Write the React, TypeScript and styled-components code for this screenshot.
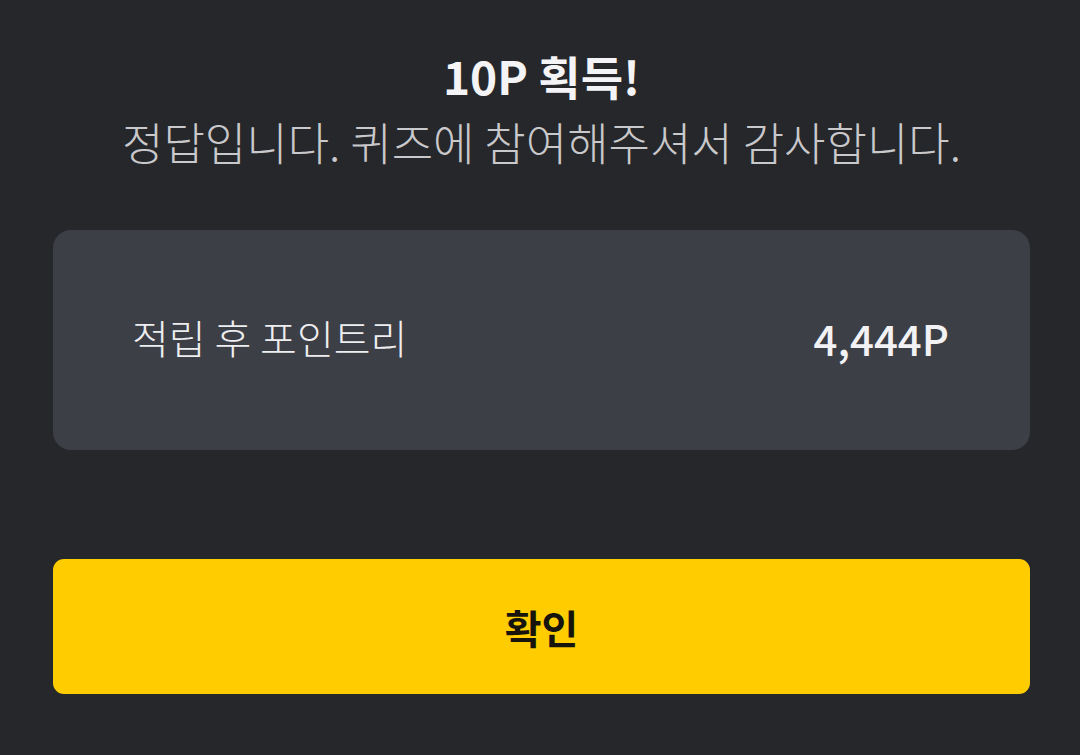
import { createGlobalStyle, styled } from "styled-components"

const GlobalStyle = createGlobalStyle`
  html, body {
    margin: 0;
    padding: 0;
    background: #26272b;
  }
  body {
    font-family: "Noto Sans CJK KR", "Noto Sans", sans-serif;
  }
`

const Wrapper = styled.div`
  width: 1080px;
  height: 755px;
  box-sizing: border-box;
  padding: 46px 50px 0 53px;
  display: flex;
  flex-direction: column;
  background: #26272b;
`

const Header = styled.div`
  display: flex;
  flex-direction: column;
  align-items: center;
  text-align: center;
`

const Title = styled.h2`
  margin: 0;
  font-size: 46px;
  font-weight: 700;
  line-height: 58px;
  color: #f4f4f6;
`

const Subtitle = styled.p`
  margin: 10px 0 0;
  font-size: 45px;
  font-weight: 300;
  line-height: 56px;
  color: #c9c9cc;
`

const Card = styled.div`
  box-sizing: border-box;
  margin-top: 60px;
  height: 220px;
  border-radius: 18px;
  background: #3d3f46;
  display: flex;
  align-items: center;
  justify-content: space-between;
  padding: 0 81px 6px 79px;
`

const Label = styled.span`
  font-size: 40px;
  font-weight: 300;
  color: #eeeef0;
`

const Value = styled.span`
  font-size: 42px;
  font-weight: 500;
  color: #f2f2f5;
`

const Button = styled.button`
  margin-top: 109px;
  height: 135px;
  border: none;
  border-radius: 11px;
  background: #ffcc00;
  color: #16140c;
  font-family: inherit;
  font-size: 40px;
  font-weight: 700;
  cursor: pointer;
`

export default function App() {
  return (
    <>
      <GlobalStyle />
      <Wrapper>
        <Header>
          <Title>10P 획득!</Title>
          <Subtitle>정답입니다. 퀴즈에 참여해주셔서 감사합니다.</Subtitle>
        </Header>
        <Card>
          <Label>적립 후 포인트리</Label>
          <Value>4,444P</Value>
        </Card>
        <Button>확인</Button>
      </Wrapper>
    </>
  )
}
